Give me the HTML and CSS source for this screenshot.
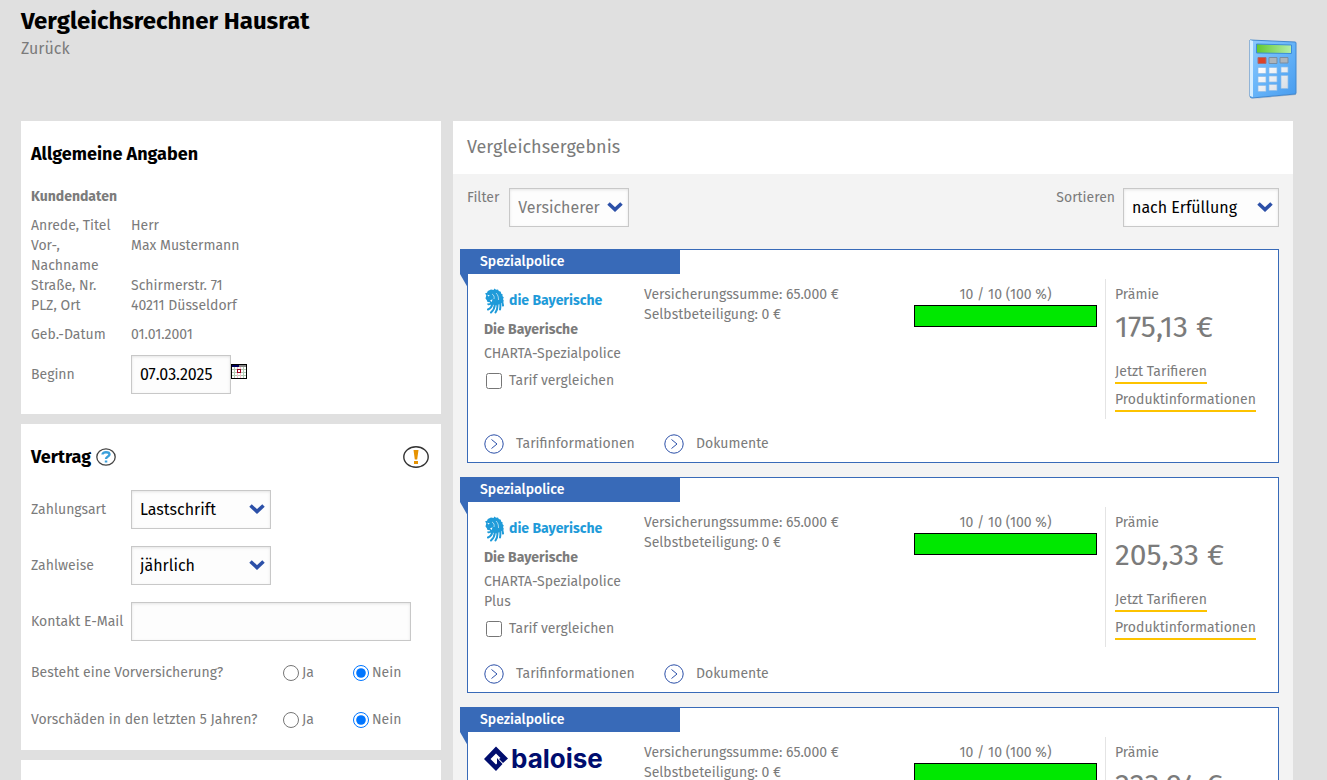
FILE: index.html
```html
<!DOCTYPE html>
<html lang="de">

<head>
  <meta charset="UTF-8">
  <meta name="viewport" content="width=device-width, initial-scale=1.0">
  <title>Vergleichsrechner Hausrat</title>
  <link rel="stylesheet" href="styles.css">
</head>

<body>
  <!-- Symbole zur Wiederverwendung -->
  <svg class="symbols" aria-hidden="true">
    <symbol id="chevron" viewBox="0 0 16 10">
      <path d="M1.500 1.500L8 7.500l6.500-6" fill="none" stroke="#2c50a8" stroke-width="3.600" />
    </symbol>
    <symbol id="circle-arrow" viewBox="0 0 20 20">
      <circle cx="10" cy="10" r="9.200" fill="none" stroke="#2c50a8" stroke-width="1" />
      <path d="M7.500 5.500l5.500 4.500-5.500 4.500" fill="none" stroke="#2c50a8" stroke-width="1" />
    </symbol>
    <symbol id="lion" viewBox="0 0 20 26">
      <path fill="#1f9bd9" d="M7 1.500L9.500 2 10.500.5l1.500 1.300 2-.3.800 1.600 2 .6.300 1.800 1.600 1.100-.3 1.500 1.400 1.500-.8 1.300.8 2-1.300 1.500-6 3-4.500-1-3.200.8c-1.200 0-1.600-.8-1.600-1.800l2.600-.2.200-1-2.500-.2-.8-2L1.500 10.500c.2-1.500.8-2.300.7-3.500L1 5.500l2-.7.800-1.800z" />
      <path fill="none" stroke="#1f9bd9" stroke-width="2" stroke-linecap="round" d="M8 15c.5 3-.8 5-4 6.500M10.500 15c.8 4-.8 7-3.500 9.500M13 14c1 4 .5 7.500-1.500 10.500M15.500 13c1 2.500 1.200 5 .5 8.500M17 10c1 2 1.500 4 2 7.500" />
      <path fill="#fff" d="M3.200 6.800l2.600.6-1.300 1zM6 12.500l2.500-1.300-.8 2.800z" />
      <path fill="none" stroke="#fff" stroke-width=".6" d="M8 6c2 1 2.500 3 2 5M12 5c2 2 2.500 4 2.500 7" />
    </symbol>
  </svg>

  <header class="page-header">
    <div>
      <h1 class="page-title">Vergleichsrechner Hausrat</h1>
      <a class="back-link" href="#">Zurück</a>
    </div>
    <svg class="calculator" viewBox="0 0 50 62" aria-hidden="true">
      <defs>
        <linearGradient id="calc-body" x1="0" y1="0" x2="1" y2="1">
          <stop offset="0" stop-color="#8fcbff" />
          <stop offset=".5" stop-color="#66b4f9" />
          <stop offset="1" stop-color="#479bee" />
        </linearGradient>
        <linearGradient id="calc-screen">
          <stop offset="0" stop-color="#62c92f" />
          <stop offset="1" stop-color="#b5eeaa" />
        </linearGradient>
        <linearGradient id="calc-key" x1="0" y1="0" x2="1" y2="1">
          <stop offset="0" stop-color="#fff" />
          <stop offset="1" stop-color="#d5dce4" />
        </linearGradient>
      </defs>
      <path d="M3 60l45-4V3l-1 52z" fill="#a8b6c6" />
      <path d="M2 1l45 2q1 0 1 1v50q0 1-1 1L4 59q-2 0-2-2z" fill="url(#calc-body)" stroke="#4288cf" />
      <path d="M2 1l3 1v56l-3-1z" fill="#d4edff" />
      <path d="M8.500 5l35 1v8.500l-35-.5z" fill="url(#calc-screen)" stroke="#3c8bda" />
      <path d="M10 18.500h8v6h-8z" fill="#dd4328" stroke="#a56d77" />
      <path d="M21 18.500h8v6h-8zM32 18.500h8v5.500h-8z" fill="#aeb4ba" stroke="#788da2" />
      <path d="M10 28.500h8v6h-8zM21 28.500h8v6h-8zM33 28h7v5.500h-7zM10 37.500h8v6h-8zM21 37h8v6h-8zM10 46.500h8v6h-8zM21 45.500h8v6h-8zM33 36.500h7v13h-7z" fill="url(#calc-key)" stroke="#8cbce8" stroke-width=".7" />
    </svg>
  </header>

  <div class="layout">
    <aside class="sidebar">
      <section class="panel">
        <h2 class="panel-title">Allgemeine Angaben</h2>
        <h3 class="panel-subtitle">Kundendaten</h3>
        <dl class="customer">
          <dt>Anrede, Titel</dt>
          <dd>Herr</dd>
          <dt>Vor-, Nachname</dt>
          <dd>Max Mustermann</dd>
          <dt>Straße, Nr.</dt>
          <dd>Schirmerstr. 71</dd>
          <dt>PLZ, Ort</dt>
          <dd>40211 Düsseldorf</dd>
        </dl>
        <dl class="customer">
          <dt>Geb.-Datum</dt>
          <dd>01.01.2001</dd>
        </dl>
        <div class="field">
          <label for="beginn">Beginn</label>
          <input class="control control-date" id="beginn" type="text" value="07.03.2025">
          <button class="calendar-btn" type="button" aria-label="Kalender">
            <svg viewBox="0 0 16 15" shape-rendering="crispEdges" aria-hidden="true">
              <path fill="#000" d="M0 0h16v15H0z" />
              <path fill="#fff" d="M1 3h14v11H1z" />
              <path fill="#00005c" d="M1 1h7v2H1z" />
              <path fill="#848484" d="M8 1h7v2H8z" />
              <path fill="#b4ccb4" d="M1 5h14v1H1zM1 8h14v1H1zM1 11h14v1H1zM3 3h1v11H3zM12 3h1v11h-1z" />
              <path fill="#f4c4cc" d="M6 3h1v11H6zM9 3h1v11H9z" />
              <path fill="#9c0020" d="M6 5h4v4H6z" />
              <path fill="#fff" d="M7 6h2v2H7z" />
            </svg>
          </button>
        </div>
      </section>

      <section class="panel">
        <div class="panel-head">
          <h2 class="panel-title">Vertrag</h2>
          <button class="icon-btn" type="button" aria-label="Hilfe">
            <svg width="20" height="18" viewBox="0 0 20 18" aria-hidden="true">
              <ellipse cx="10" cy="9" rx="9.200" ry="8.200" fill="#fff" stroke="#444" stroke-width="1.300" />
              <path d="M6.500 6.500c0-3 7-3 7 0 0 2-3.500 2-3.500 4.500" fill="none" stroke="#3ba0db" stroke-width="2.400" />
              <path d="M8.800 12.500h2.500v2H8.800z" fill="#3ba0db" />
            </svg>
          </button>
          <button class="icon-btn icon-btn-end" type="button" aria-label="Hinweis">
            <svg width="26" height="22" viewBox="0 0 26 22" aria-hidden="true">
              <ellipse cx="13" cy="11" rx="12.200" ry="10.200" fill="#fff" stroke="#333" stroke-width="1.400" />
              <path d="M10.500 4h5l-1.300 9.500h-2.400zM11 15h4v3h-4z" fill="#e69200" />
            </svg>
          </button>
        </div>
        <div class="field">
          <label for="zahlungsart">Zahlungsart</label>
          <span class="select select-medium">
            <select class="control" id="zahlungsart">
              <option>Lastschrift</option>
            </select>
            <svg class="chevron" aria-hidden="true"><use href="#chevron" /></svg>
          </span>
        </div>
        <div class="field">
          <label for="zahlweise">Zahlweise</label>
          <span class="select select-medium">
            <select class="control" id="zahlweise">
              <option>jährlich</option>
            </select>
            <svg class="chevron" aria-hidden="true"><use href="#chevron" /></svg>
          </span>
        </div>
        <div class="field">
          <label for="email">Kontakt E-Mail</label>
          <input class="control control-wide" id="email" type="email">
        </div>
        <div class="question" role="radiogroup" aria-labelledby="frage-vorversicherung">
          <span id="frage-vorversicherung">Besteht eine Vorversicherung?</span>
          <label class="choice"><input type="radio" name="vorversicherung">Ja</label>
          <label class="choice"><input type="radio" name="vorversicherung" checked>Nein</label>
        </div>
        <div class="question" role="radiogroup" aria-labelledby="frage-vorschaeden">
          <span id="frage-vorschaeden">Vorschäden in den letzten 5 Jahren?</span>
          <label class="choice"><input type="radio" name="vorschaeden">Ja</label>
          <label class="choice"><input type="radio" name="vorschaeden" checked>Nein</label>
        </div>
      </section>

      <section class="panel"></section>
    </aside>

    <main class="results">
      <h2 class="results-title">Vergleichsergebnis</h2>
      <div class="results-body">
        <div class="toolbar">
          <label for="filter">Filter</label>
          <span class="select select-filter">
            <select class="control" id="filter">
              <option>Versicherer</option>
            </select>
            <svg class="chevron" aria-hidden="true"><use href="#chevron" /></svg>
          </span>
          <label class="sort-label" for="sortieren">Sortieren</label>
          <span class="select select-sort">
            <select class="control" id="sortieren">
              <option>nach Erfüllung</option>
            </select>
            <svg class="chevron" aria-hidden="true"><use href="#chevron" /></svg>
          </span>
        </div>

        <article class="offer">
          <div class="ribbon">Spezialpolice</div>
          <div class="offer-body">
            <div class="tariff">
              <div class="logo logo-bayerische">
                <svg width="20" height="26" aria-hidden="true"><use href="#lion" /></svg>
                <span>die Bayerische</span>
              </div>
              <div class="insurer">Die Bayerische</div>
              <div class="tariff-name">CHARTA-Spezialpolice</div>
              <label class="compare"><input type="checkbox">Tarif vergleichen</label>
            </div>
            <div class="terms">
              <div>Versicherungssumme: 65.000 €</div>
              <div>Selbstbeteiligung: 0 €</div>
            </div>
            <div class="score">
              <div>10 / 10 (100 %)</div>
              <div class="score-bar"></div>
            </div>
            <div class="premium">
              <div>Prämie</div>
              <div class="price">175,13 €</div>
              <a class="offer-link" href="#">Jetzt Tarifieren</a>
              <a class="offer-link" href="#">Produktinformationen</a>
            </div>
          </div>
          <div class="offer-footer">
            <a class="more" href="#"><svg width="20" height="20" aria-hidden="true"><use href="#circle-arrow" /></svg>Tarifinformationen</a>
            <a class="more" href="#"><svg width="20" height="20" aria-hidden="true"><use href="#circle-arrow" /></svg>Dokumente</a>
          </div>
        </article>

        <article class="offer">
          <div class="ribbon">Spezialpolice</div>
          <div class="offer-body">
            <div class="tariff">
              <div class="logo logo-bayerische">
                <svg width="20" height="26" aria-hidden="true"><use href="#lion" /></svg>
                <span>die Bayerische</span>
              </div>
              <div class="insurer">Die Bayerische</div>
              <div class="tariff-name">CHARTA-Spezialpolice Plus</div>
              <label class="compare"><input type="checkbox">Tarif vergleichen</label>
            </div>
            <div class="terms">
              <div>Versicherungssumme: 65.000 €</div>
              <div>Selbstbeteiligung: 0 €</div>
            </div>
            <div class="score">
              <div>10 / 10 (100 %)</div>
              <div class="score-bar"></div>
            </div>
            <div class="premium">
              <div>Prämie</div>
              <div class="price">205,33 €</div>
              <a class="offer-link" href="#">Jetzt Tarifieren</a>
              <a class="offer-link" href="#">Produktinformationen</a>
            </div>
          </div>
          <div class="offer-footer">
            <a class="more" href="#"><svg width="20" height="20" aria-hidden="true"><use href="#circle-arrow" /></svg>Tarifinformationen</a>
            <a class="more" href="#"><svg width="20" height="20" aria-hidden="true"><use href="#circle-arrow" /></svg>Dokumente</a>
          </div>
        </article>

        <article class="offer">
          <div class="ribbon">Spezialpolice</div>
          <div class="offer-body">
            <div class="tariff">
              <div class="logo logo-baloise">
                <svg width="24" height="26" viewBox="0 0 24 26" aria-hidden="true">
                  <path fill="#000d6e" d="M12 .5L24 12.500l-5 4.500-4-4 1.500-1L12 7.500 6.500 13l5.500 5.500 1-1V12l5.500 6L12 25 0 13z" />
                </svg>
                <span>baloise</span>
              </div>
            </div>
            <div class="terms">
              <div>Versicherungssumme: 65.000 €</div>
              <div>Selbstbeteiligung: 0 €</div>
            </div>
            <div class="score">
              <div>10 / 10 (100 %)</div>
              <div class="score-bar"></div>
            </div>
            <div class="premium">
              <div>Prämie</div>
              <div class="price">223,94 €</div>
            </div>
          </div>
        </article>
      </div>
    </main>
  </div>
</body>

</html>
```
FILE: styles.css
```css
:root {
  --page: #e0e0e0;
  --text: #7b7b7b;
  --blue: #386ab8;
  --line: #c8c8c8;
  --yellow: #fdc300;
}

* {
  box-sizing: border-box;
}

html {
  scrollbar-width: none;
}

body {
  margin: 0;
  background: var(--page);
  color: var(--text);
  font-family: "Fira Sans", Roboto, sans-serif;
  font-size: 14px;
  line-height: 20px;
}

h1,
h2,
h3,
dl,
dd {
  margin: 0;
}

a {
  color: inherit;
  text-decoration: none;
}

button {
  padding: 0;
  border: 0;
  background: none;
  cursor: pointer;
}

svg {
  display: block;
  flex: none;
}

.symbols {
  display: none;
}

/* Kopfbereich */
.page-header {
  display: flex;
  justify-content: space-between;
  align-items: flex-start;
  padding: 5px 29px 20px 21px;
}

.page-title {
  color: #000;
  font-size: 24px;
  line-height: 32px;
}

.back-link {
  display: block;
  font-size: 16px;
  line-height: 24px;
}

.calculator {
  width: 50px;
  height: 62px;
  margin-top: 34px;
}

.layout {
  display: flex;
  gap: 12px;
  padding: 0 34px 0 21px;
}

/* Linke Spalte */
.sidebar {
  display: flex;
  flex: none;
  flex-direction: column;
  gap: 10px;
  width: 420px;
}

.panel {
  padding: 20px 10px;
  background: #fff;
}

.panel-title {
  color: #000;
  font-size: 18px;
  line-height: 26px;
}

.panel-subtitle {
  margin: 20px 0 9px;
  font-size: 14px;
}

.panel-head {
  display: flex;
  align-items: center;
  gap: 5px;
  margin-bottom: 20px;
}

.icon-btn-end {
  margin-left: auto;
  margin-right: 2px;
}

.customer {
  display: grid;
  grid-template-columns: 90px 1fr;
  column-gap: 10px;
  margin-bottom: 10px;
}

.customer + .customer {
  margin-top: -1px;
}

.field {
  display: flex;
  align-items: center;
  margin-bottom: 17px;
}

.field:last-child {
  margin-bottom: 0;
}

.field > label {
  width: 100px;
  white-space: nowrap;
}

.control {
  width: 100%;
  height: 39px;
  padding: 0 8px;
  border: 1px solid var(--line);
  border-radius: 0;
  background: #fdfdfd;
  box-shadow: inset 0 1px 3px rgba(0, 0, 0, 0.1);
  color: #000;
  font-family: inherit;
  font-size: 16px;
  appearance: none;
}

.control-date {
  width: 100px;
}

.control-wide {
  width: 280px;
}

.select {
  position: relative;
}

.select-medium {
  width: 140px;
}

.select-filter {
  width: 120px;
}

.select-filter .control {
  color: var(--text);
}

.select-sort {
  width: 156px;
}

.chevron {
  position: absolute;
  top: 14px;
  right: 6px;
  width: 16px;
  height: 10px;
  pointer-events: none;
}

.calendar-btn {
  align-self: flex-start;
  width: 16px;
  margin-top: 9px;
}

.question {
  display: grid;
  grid-template-columns: 1fr 70px 78px;
  align-items: center;
  margin-top: 27px;
}

.field + .question {
  margin-top: 22px;
}

.choice {
  display: flex;
  align-items: center;
  gap: 3px;
}

.choice input,
.compare input {
  width: 16px;
  height: 16px;
  margin: 0;
}

/* Ergebnisliste */
.results {
  flex: 1;
  min-width: 0;
  background: #f3f3f3;
}

.results-title {
  padding: 12px 14px 13px;
  background: #fff;
  font-size: 18px;
  font-weight: 400;
  line-height: 28px;
}

.results-body {
  padding: 14px;
}

.toolbar {
  display: flex;
  gap: 8px;
  margin-bottom: 22px;
}

.select-filter {
  margin-left: 2px;
}

.sort-label {
  margin-left: auto;
}

.offer {
  position: relative;
  margin-bottom: 14px;
  padding-top: 29px;
  border: 1px solid var(--blue);
  background: #fff;
}

.ribbon {
  position: absolute;
  top: -1px;
  left: -8px;
  width: 220px;
  padding: 3px 20px 2px;
  background: var(--blue);
  color: #fff;
  font-weight: 500;
}

.ribbon::after {
  content: "";
  position: absolute;
  top: 100%;
  left: 0;
  border-top: 14px solid var(--blue);
  border-left: 8px solid transparent;
}

.offer-body {
  display: grid;
  grid-template-columns: 160px 1fr 183px 181px;
  padding-left: 16px;
}

.tariff {
  padding: 9px 16px 10px 0;
}

.logo {
  display: flex;
  align-items: center;
  height: 26px;
  margin-bottom: 6px;
  white-space: nowrap;
}

.logo-bayerische {
  gap: 5px;
  color: #1f9bd9;
  font-weight: 700;
}

.logo-baloise {
  gap: 3px;
  color: #000d6e;
  font-family: Inter, sans-serif;
  font-size: 26px;
  font-weight: 700;
}

.insurer {
  font-weight: 700;
}

.tariff-name {
  margin: 4px 0 7px;
}

.compare {
  display: flex;
  align-items: center;
  gap: 7px;
  padding-left: 2px;
}

.terms,
.score {
  padding-top: 6px;
}

.score {
  text-align: center;
}

.score-bar {
  height: 22px;
  border: 1px solid #000;
  background: #00e800;
}

.premium {
  min-height: 140px;
  align-self: start;
  margin-left: 8px;
  padding: 6px 0 0 9px;
  border-left: 1px solid #e4e4e4;
}

.price {
  margin-bottom: 13px;
  font-size: 30px;
  line-height: 44px;
}

.offer-link {
  display: block;
  width: fit-content;
  margin-bottom: 6px;
  border-bottom: 2px solid var(--yellow);
}

.offer-footer {
  display: flex;
  padding: 15px 16px 8px;
}

.more {
  display: flex;
  gap: 12px;
  width: 180px;
}
```
